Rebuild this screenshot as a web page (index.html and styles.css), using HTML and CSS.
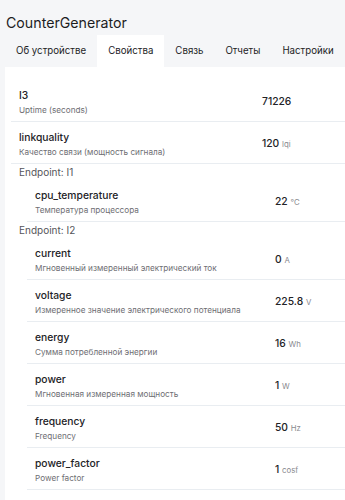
FILE: index.html
```html
<!DOCTYPE html>
<html lang="ru">
<head>
<meta charset="utf-8">
<title>CounterGenerator</title>
<link rel="stylesheet" href="styles.css">
</head>
<body>
<div class="page">
  <h1 class="title">CounterGenerator</h1>
  <nav class="tabs">
    <div class="tab">Об устройстве</div>
    <div class="tab active">Свойства</div>
    <div class="tab">Связь</div>
    <div class="tab">Отчеты</div>
    <div class="tab">Настройки</div>
  </nav>
  <div class="panel">
    <div class="list">
      <div class="row">
        <div class="name"><div class="label">I3</div><div class="sub">Uptime (seconds)</div></div>
        <div class="value">71226</div>
      </div>
      <div class="row">
        <div class="name"><div class="label">linkquality</div><div class="sub">Качество связи (мощность сигнала)</div></div>
        <div class="value">120 <span class="unit">lqi</span></div>
      </div>
      <div class="endpoint">Endpoint: I1</div>
      <div class="group">
        <div class="row nested">
          <div class="name"><div class="label">cpu_temperature</div><div class="sub">Температура процессора</div></div>
          <div class="value">22 <span class="unit">°C</span></div>
        </div>
      </div>
      <div class="endpoint">Endpoint: I2</div>
      <div class="group">
        <div class="row nested">
          <div class="name"><div class="label">current</div><div class="sub">Мгновенный измеренный электрический ток</div></div>
          <div class="value">0 <span class="unit">A</span></div>
        </div>
        <div class="row nested">
          <div class="name"><div class="label">voltage</div><div class="sub">Измеренное значение электрического потенциала</div></div>
          <div class="value">225.8 <span class="unit">V</span></div>
        </div>
        <div class="row nested">
          <div class="name"><div class="label">energy</div><div class="sub">Сумма потребленной энергии</div></div>
          <div class="value">16 <span class="unit">Wh</span></div>
        </div>
        <div class="row nested">
          <div class="name"><div class="label">power</div><div class="sub">Мгновенная измеренная мощность</div></div>
          <div class="value">1 <span class="unit">W</span></div>
        </div>
        <div class="row nested">
          <div class="name"><div class="label">frequency</div><div class="sub">Frequency</div></div>
          <div class="value">50 <span class="unit">Hz</span></div>
        </div>
        <div class="row nested">
          <div class="name"><div class="label">power_factor</div><div class="sub">Power factor</div></div>
          <div class="value">1 <span class="unit">cosf</span></div>
        </div>
      </div>
    </div>
  </div>
</div>
</body>
</html>
```

FILE: styles.css
```css
* { box-sizing: border-box; }
html, body { margin: 0; padding: 0; }
body {
  background: #f5f6f8;
  font-family: Inter, "Liberation Sans", Arial, sans-serif;
  color: #1d1d1f;
  overflow: hidden;
  height: 500px;
}
.page { padding-top: 13px; }
.title {
  margin: 0 0 0 6px;
  font-size: 14.2px;
  font-weight: 400;
  line-height: 20px;
  height: 22px;
  color: #1d1d1f;
}
.tabs {
  display: flex;
  padding-left: 5px;
  height: 32px;
}
.tab {
  padding: 0 11px;
  font-size: 9.7px;
  line-height: 32px;
  color: #1d1d1f;
  white-space: nowrap;
}
.tab.active { background: #fff; }
.panel {
  background: #fff;
  margin-left: 5px;
  padding: 13px 0 20px 6px;
}
.row {
  display: grid;
  grid-template-columns: 243px 1fr;
  align-items: center;
  padding: 7px 8px 4px;
  border-bottom: 1px solid #e9edf1;
  height: 42px;
}
.row.nested { grid-template-columns: 240px 1fr; }
.group { padding-left: 16px; }
.label {
  font-size: 10.3px;
  font-weight: 500;
  line-height: 16px;
  color: #222226;
  white-space: nowrap;
}
.sub {
  font-size: 8.2px;
  line-height: 14px;
  color: #6e6e73;
  white-space: nowrap;
}
.value {
  font-size: 10.3px;
  font-weight: 500;
  color: #222226;
  white-space: nowrap;
  margin-top: -3px;
}
.unit {
  font-size: 7.8px;
  font-weight: 400;
  color: #8a8a8f;
}
.endpoint {
  font-size: 10px;
  line-height: 16px;
  color: #55555a;
  padding-left: 8px;
}
```
